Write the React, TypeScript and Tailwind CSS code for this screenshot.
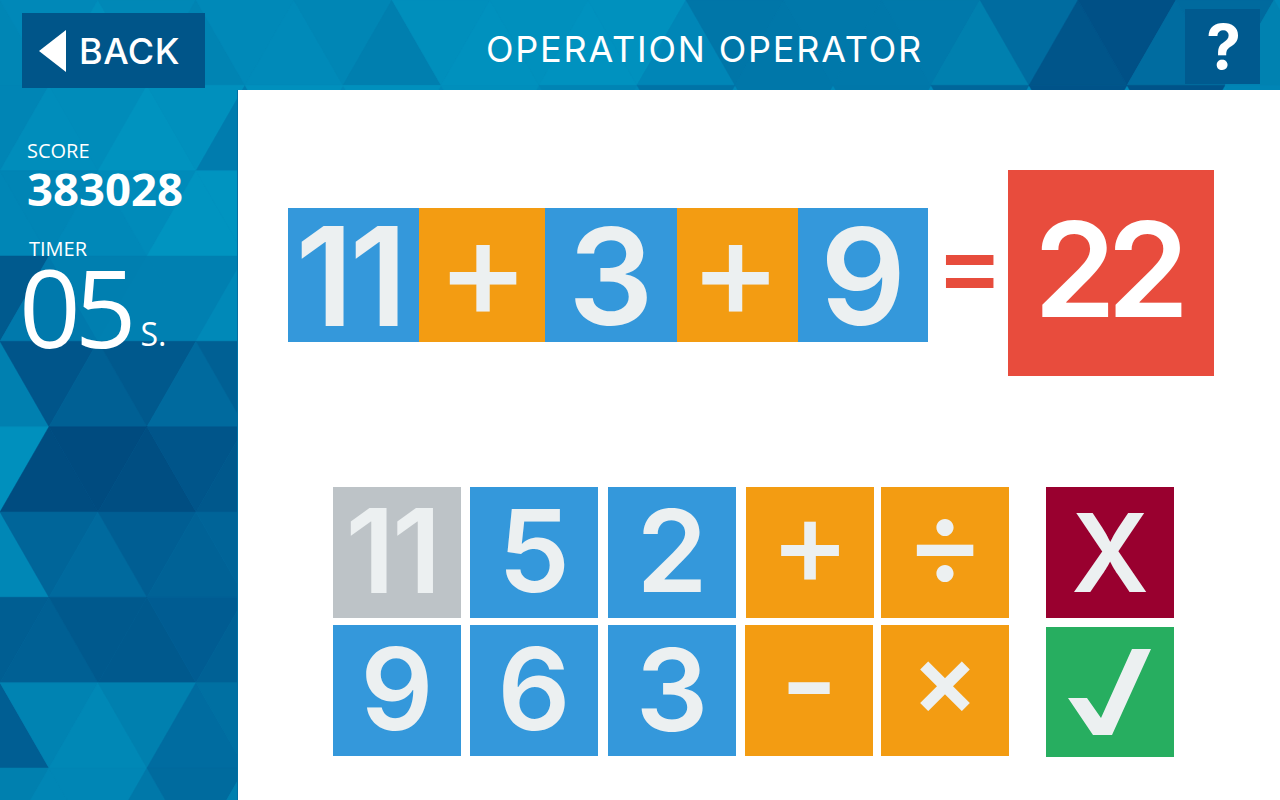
import type { ReactNode } from "react";

const ROW_H = 85.33;

// colours by triangle centre x, one list per row of the triangle grid
const ROWS: Record<number, string>[] = [
  { 0: "#0086B5", 49: "#0088B8", 98: "#008FBC", 147: "#0088B7", 196: "#0084B3", 245: "#0089B8", 294: "#008AB9", 343: "#0086B5", 392: "#007FAF", 441: "#008FBC", 490: "#0091BE", 539: "#0090BD", 588: "#0092BF", 637: "#0091BE", 686: "#0086B7", 735: "#0076A8", 784: "#0077A9", 833: "#0078AA", 882: "#0078AA", 931: "#0079AB", 980: "#0080AF", 1029: "#006CA0", 1078: "#00558A", 1127: "#005086", 1176: "#006CA0", 1225: "#006A9E", 1274: "#0082B1" },
  { 0: "#0085B5", 49: "#008DBB", 98: "#008CBA", 147: "#0093BF", 196: "#0090BD", 245: "#007CAE", 294: "#0090BD", 392: "#0090BD", 490: "#008FBC", 588: "#0084B4", 686: "#0073A6", 784: "#0077A9", 882: "#0077A9", 980: "#00669A", 1078: "#005389", 1176: "#005389", 1274: "#0085B5" },
  { 0: "#0086B6", 49: "#0085B5", 98: "#0088B8", 147: "#008BBA", 196: "#0094C0", 245: "#0094C0" },
  { 0: "#005A8E", 49: "#0079AC", 98: "#007FB0", 147: "#0080B1", 196: "#0080B1", 245: "#0089B8" },
  { 0: "#0080B0", 49: "#00558A", 98: "#006094", 147: "#00598D", 196: "#006A9E", 245: "#006094" },
  { 0: "#0090BD", 49: "#004C80", 98: "#004B7F", 147: "#004E82", 196: "#00558A", 245: "#00588C" },
  { 0: "#0087B6", 49: "#006599", 98: "#006A9E", 147: "#005E93", 196: "#006296", 245: "#006498" },
  { 0: "#005E92", 49: "#006094", 98: "#00598D", 147: "#00598D", 196: "#005C92", 245: "#006195" },
  { 0: "#005E93", 49: "#0083B2", 98: "#0088B6", 147: "#0080AF", 196: "#006CA0", 245: "#0070A2" },
  { 0: "#0080AF", 49: "#0086B5", 98: "#0086B5", 147: "#0078A9", 196: "#006B9E", 245: "#0080AF" },
];

function Triangles() {
  return (
    <svg className="absolute inset-0" width="1280" height="800" viewBox="0 0 1280 800">
      <rect width="1280" height="800" fill="#0088B8" />
      {ROWS.map((row, r) =>
        Object.entries(row).map(([key, fill]) => {
          const cx = Number(key);
          const top = r * ROW_H;
          const bottom = top + ROW_H;
          // a triangle points up when its centre sits on a top vertex of the row
          const up = r % 2 === 0 ? cx % 98 === 0 : (cx - 49) % 98 === 0;
          const points = up
            ? `${cx},${top} ${cx + 49},${bottom} ${cx - 49},${bottom}`
            : `${cx - 49},${top} ${cx + 49},${top} ${cx},${bottom}`;
          return <polygon key={`${r}-${cx}`} points={points} fill={fill} stroke={fill} strokeWidth="0.5" />;
        })
      )}
    </svg>
  );
}

function Tile({ className, children }: { className: string; children: ReactNode }) {
  return (
    <div className={`flex shrink-0 items-center justify-center font-['Inter',sans-serif] leading-none text-[#ECF0F1] ${className}`}>
      {children}
    </div>
  );
}

export default function App() {
  return (
    <div className="relative h-[800px] w-[1280px] overflow-hidden">
      <Triangles />

      {/* Header */}
      <div className="relative flex h-[90px]">
        <button className="mt-[13px] ml-[22px] flex h-[75px] w-[183px] items-center bg-[#005589] pl-[17px] font-['Inter',sans-serif] text-[36px] leading-none font-medium tracking-[0.5px] text-white">
          <svg width="27" height="42" viewBox="0 0 27 42" className="mr-[13px] shrink-0">
            <polygon points="0,21 27,0 27,42" fill="#ffffff" />
          </svg>
          BACK
        </button>
        <div className="ml-[281px] flex h-[97px] w-[437px] items-center justify-center font-['Inter',sans-serif] text-[36px] leading-none tracking-[1.8px] whitespace-nowrap text-white">
          OPERATION OPERATOR
        </div>
        <button className="mt-[9px] ml-[262px] flex h-[75px] w-[75px] items-center justify-center bg-[#005A8F] pl-[2px] font-['Inter',sans-serif] text-[62px] leading-none font-bold text-white">
          ?
        </button>
      </div>

      <div className="relative flex h-[710px]">
        {/* Sidebar */}
        <div className="w-[238px] shrink-0 border-r border-[#006FA3] pt-[49px] pl-[27px] font-['Open_Sans',sans-serif] text-white">
          <div className="text-[20px] leading-[24px] font-medium">SCORE</div>
          <div className="mt-[1px] text-[45.5px] leading-[48px] font-bold">383028</div>
          <div className="mt-[25px] ml-[2px] text-[20px] leading-[24px] font-medium">TIMER</div>
          <div className="mt-[4px] -ml-[8px] flex items-baseline">
            <span className="text-[108px] leading-[84px] font-normal tracking-[-6px]">05</span>
            <span className="ml-[10px] -translate-y-[2px] text-[32px] leading-none">S.</span>
          </div>
        </div>

        {/* Game board */}
        <div className="flex-1 bg-white pt-[80px] pl-[50px]">
          <div className="flex h-[206px] items-center">
            <div className="mt-[4px] flex">
              <Tile className="h-[134px] w-[131px] bg-[#3498DB] pt-[2px] pr-[8px] text-[137px] font-semibold tracking-[-4px]">11</Tile>
              <Tile className="h-[134px] w-[126px] bg-[#F39C12] pb-[14px] pl-[2px] text-[138px] font-medium">+</Tile>
              <Tile className="h-[134px] w-[132px] bg-[#3498DB] pt-[2px] text-[134px] font-semibold">3</Tile>
              <Tile className="h-[134px] w-[121px] bg-[#F39C12] pr-[4px] pb-[14px] text-[138px] font-medium">+</Tile>
              <Tile className="h-[134px] w-[130px] bg-[#3498DB] pt-[2px] text-[134px] font-semibold">9</Tile>
            </div>
            <div className="ml-[7px] w-[66px] pb-[20px] text-center font-['Inter',sans-serif] text-[104px] leading-none font-medium text-[#E74C3C]">=</div>
            <Tile className="ml-[7px] h-[206px] w-[206px] bg-[#E84C3D] pr-[8px] pb-[8px] text-[132px] font-semibold tracking-[-9px] text-white">22</Tile>
          </div>

          <div className="mt-[111px] ml-[45px] flex">
            <div className="flex flex-col gap-[7px]">
              <div className="flex">
                <Tile className="h-[131px] w-[128px] bg-[#BDC3C7] pr-[10px] pb-[4px] text-[117px] font-semibold tracking-[-3px]">11</Tile>
                <Tile className="ml-[9px] h-[131px] w-[128px] bg-[#3498DB] pb-[4px] text-[114px] font-semibold">5</Tile>
                <Tile className="ml-[10px] h-[131px] w-[128px] bg-[#3498DB] pb-[4px] text-[114px] font-semibold">2</Tile>
                <Tile className="ml-[10px] h-[131px] w-[128px] bg-[#F39C12] pb-[22px] text-[120px] font-medium">+</Tile>
                <Tile className="ml-[7px] h-[131px] w-[128px] bg-[#F39C12] pb-[22px] text-[120px] font-medium">÷</Tile>
              </div>
              <div className="flex">
                <Tile className="h-[131px] w-[128px] bg-[#3498DB] pb-[4px] text-[114px] font-semibold">9</Tile>
                <Tile className="ml-[9px] h-[131px] w-[128px] bg-[#3498DB] pb-[4px] text-[114px] font-semibold">6</Tile>
                <Tile className="ml-[10px] h-[131px] w-[128px] bg-[#3498DB] pb-[2px] text-[114px] font-semibold">3</Tile>
                <Tile className="ml-[9px] h-[131px] w-[128px] bg-[#F39C12] pb-[18px] text-[127px] font-medium">-</Tile>
                <Tile className="ml-[8px] h-[131px] w-[128px] bg-[#F39C12] pb-[24px] text-[100px] font-semibold">×</Tile>
              </div>
            </div>
            <div className="ml-[37px] flex flex-col gap-[9px]">
              <Tile className="h-[131px] w-[128px] bg-[#99002F] text-[108px] font-semibold">X</Tile>
              <Tile className="h-[130px] w-[128px] bg-[#27AE60]">
                <svg width="128" height="130" viewBox="0 0 128 130">
                  <polygon points="22,71 41,71 55,91 86,22 105,22 66,108 47,108" fill="#ECF0F1" />
                </svg>
              </Tile>
            </div>
          </div>
        </div>
      </div>
    </div>
  );
}
